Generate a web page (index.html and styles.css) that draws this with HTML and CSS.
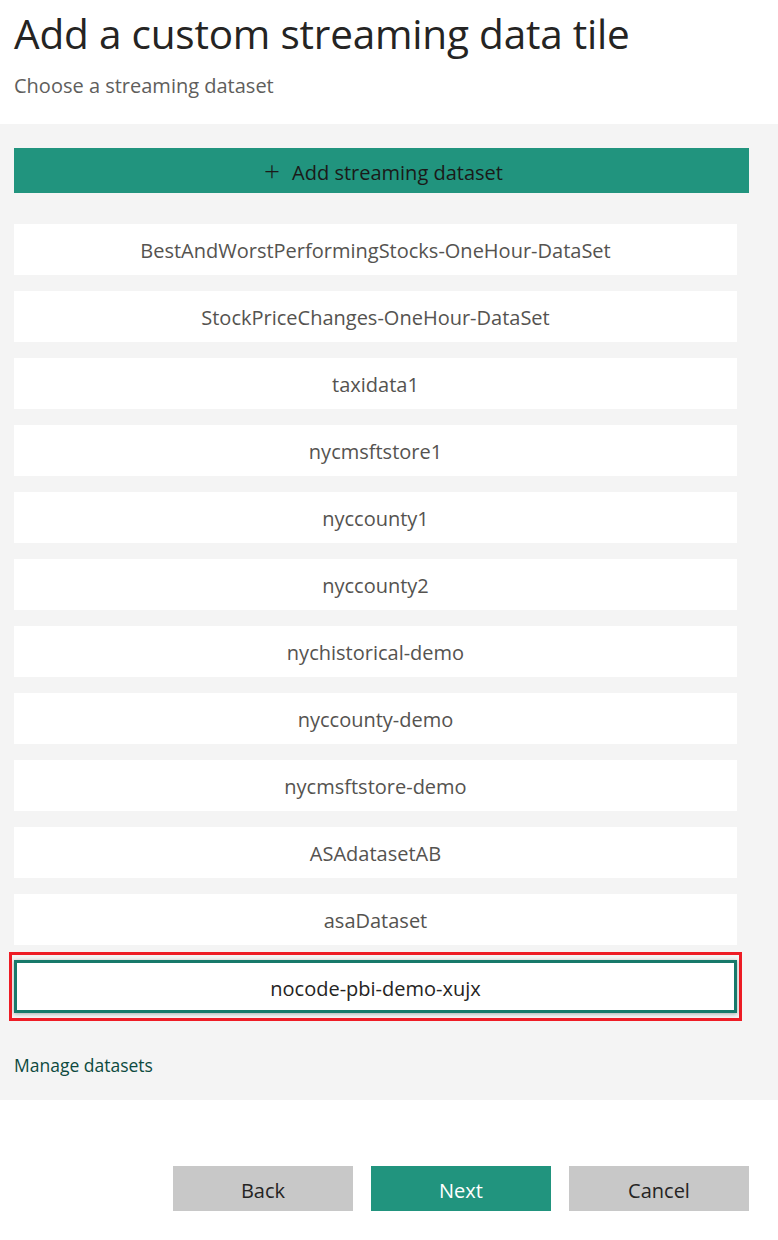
FILE: index.html
```html
<!DOCTYPE html>
<html>
<head>
<meta charset="utf-8">
<link rel="stylesheet" href="styles.css">
</head>
<body>
<div class="page">
  <header class="head">
    <h1 class="title">Add a custom streaming data tile</h1>
    <p class="subtitle">Choose a streaming dataset</p>
  </header>
  <section class="panel">
    <button class="add-btn"><span class="plus">+</span><span>Add streaming dataset</span></button>
    <ul class="list">
      <li class="item">BestAndWorstPerformingStocks-OneHour-DataSet</li>
      <li class="item">StockPriceChanges-OneHour-DataSet</li>
      <li class="item">taxidata1</li>
      <li class="item">nycmsftstore1</li>
      <li class="item">nyccounty1</li>
      <li class="item">nyccounty2</li>
      <li class="item">nychistorical-demo</li>
      <li class="item">nyccounty-demo</li>
      <li class="item">nycmsftstore-demo</li>
      <li class="item">ASAdatasetAB</li>
      <li class="item">asaDataset</li>
      <li class="highlight"><div class="item selected">nocode-pbi-demo-xujx</div></li>
    </ul>
    <a class="manage">Manage datasets</a>
  </section>
  <footer class="actions">
    <button class="btn gray">Back</button>
    <button class="btn green">Next</button>
    <button class="btn gray">Cancel</button>
  </footer>
</div>
</body>
</html>
```
FILE: styles.css
```css
* { box-sizing: border-box; }
html, body { margin: 0; padding: 0; background: #fff; }
body { font-family: "Open Sans", "Noto Sans", sans-serif; width: 778px; height: 1240px; overflow: hidden; }
.head { padding: 7px 14px 0 14px; height: 124px; }
.title { margin: 0; font-weight: 400; font-size: 40.5px; line-height: 54px; color: #252423; letter-spacing: -0.2px; }
.subtitle { margin: 12px 0 0 0; font-size: 20px; line-height: 26px; color: #605e5c; }
.panel { background: #f4f4f4; padding: 24px 29px 0 14px; height: 976px; }
.add-btn { display: flex; align-items: center; justify-content: center; gap: 12px; width: 735px; height: 45px; border: 0; background: #21947e; color: #1b1a19; font-family: inherit; font-size: 20px; margin: 0; padding: 3px 0 0 4px; }
.plus { font-size: 28px; font-weight: 300; line-height: 1; margin-top: -4px; }
.list { list-style: none; margin: 31px 0 0 0; padding: 0; display: flex; flex-direction: column; gap: 16px; width: 723px; }
.item { height: 51px; background: #fff; display: flex; align-items: center; justify-content: center; font-size: 20px; color: #555350; padding-top: 2px; }
.highlight { margin: -9px -5px 0 -5px; border: 3px solid #ee1c25; padding: 5px 2px; }
.selected { height: 53px; border: 3px solid #17796a; color: #252423; box-shadow: 0 1px 4px rgba(0,0,0,0.3); padding-top: 4px; }
.manage { display: block; margin-top: 32px; font-size: 17.5px; color: #0d4a40; }
.actions { display: flex; justify-content: flex-end; gap: 18px; padding: 66px 29px 0 0; }
.btn { width: 180px; height: 45px; border: 0; font-family: inherit; font-size: 20px; padding: 3px 0 0 0; }
.gray { background: #c8c8c8; color: #252423; }
.green { background: #21947e; color: #fff; }
```
